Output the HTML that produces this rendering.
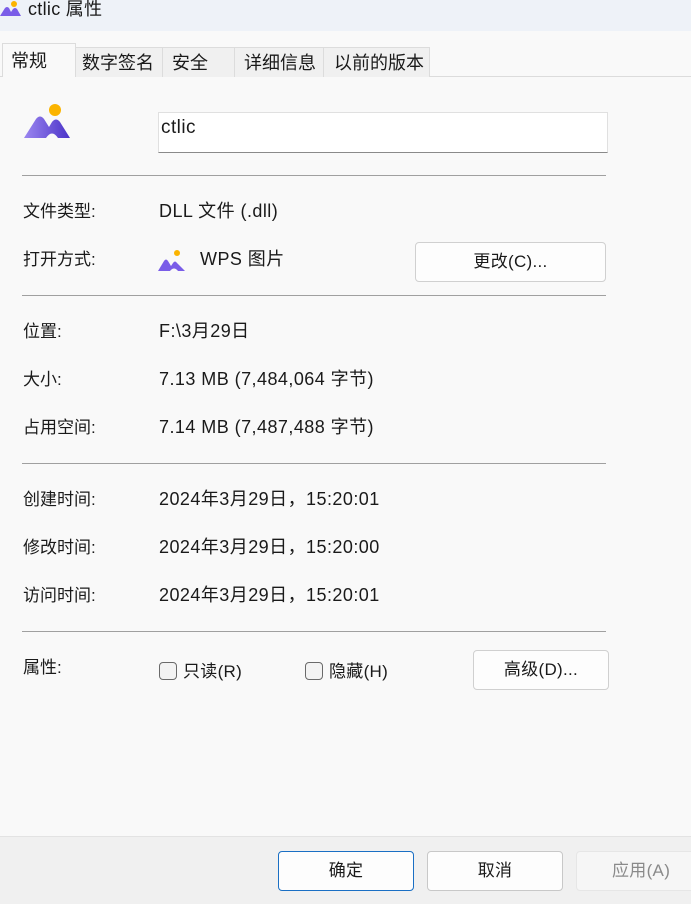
<!DOCTYPE html>
<html><head><meta charset="utf-8"><style>
body{margin:0;width:691px;height:903px;background:#f9f9f9;font-family:"Liberation Sans","Noto Sans CJK SC",sans-serif;font-size:17px;color:#1a1a1a;position:relative;overflow:hidden}
.a{position:absolute;white-space:nowrap;line-height:24px}
.v{font-size:18px;letter-spacing:0.45px}
.hr{position:absolute;left:22px;width:584px;height:1px;background:#a0a0a0}
.btn{position:absolute;background:#fdfdfd;border:1px solid #d0d0d0;border-radius:4px;text-align:center;box-sizing:border-box;font-size:17px;letter-spacing:0.3px}
.tab{position:absolute;top:47px;height:30px;background:#f0f0f0;border:1px solid #dcdcdc;border-bottom:none;box-sizing:border-box;line-height:30px;font-size:18px}
.cb{position:absolute;width:18px;height:18px;border:1px solid #6a6a6a;border-radius:4px;background:#f3f3f3;box-sizing:border-box}
</style></head><body>
<div style="position:absolute;left:0;top:0;width:691px;height:31px;background:#eef2f8"></div>
<svg style="position:absolute;left:0;top:0" width="22" height="20" viewBox="0 0 22 20"><circle cx="14" cy="4" r="3" fill="#fbb400"/><path d="M0 16 L5 8 Q7 6 9 8 L11 12 L13 9 Q15 7 17 9 L21 16 Z" fill="#7a5de8"/></svg>
<div class="a" style="left:28px;top:-3px;font-size:18px;letter-spacing:0.3px">ctlic 属性</div>
<div style="position:absolute;left:0;top:76px;width:691px;height:1px;background:#dcdcdc"></div>
<div class="tab" style="left:2px;top:43px;width:74px;height:34px;background:#f9f9f9;padding-left:8px;line-height:34px">常规</div>
<div class="tab" style="left:75px;width:88px;padding-left:6px">数字签名</div>
<div class="tab" style="left:162px;width:73px;padding-left:9px">安全</div>
<div class="tab" style="left:234px;width:90px;padding-left:9px">详细信息</div>
<div class="tab" style="left:323px;width:107px;padding-left:10px">以前的版本</div>
<svg style="position:absolute;left:22px;top:102px" width="50" height="38" viewBox="22 102 50 38"><circle cx="55" cy="110" r="6" fill="#fbb400"/><defs><linearGradient id="g" x1="0" x2="1"><stop offset="0" stop-color="#9b86f0"/><stop offset="1" stop-color="#4b34c8"/></linearGradient></defs><path d="M24 138 L36 119 Q40 114 44 119 L49 127 L52 122 Q56 117 60 122 L70 138 L58 138 Q52 129 46 138 Z" fill="url(#g)"/></svg>
<div style="position:absolute;left:158px;top:112px;width:450px;height:41px;background:#fff;border:1px solid #e0e0e0;border-bottom:1px solid #8a8a8a;box-sizing:border-box"></div>
<div class="a v" style="left:161px;top:116px;font-size:19px">ctlic</div>
<div class="hr" style="top:175px"></div>
<div class="a" style="left:23px;top:200px">文件类型:</div>
<div class="a v" style="left:159px;top:199px">DLL 文件 (.dll)</div>
<div class="a" style="left:23px;top:248px">打开方式:</div>
<svg style="position:absolute;left:158px;top:249px" width="30" height="24" viewBox="0 0 30 24"><circle cx="19" cy="4" r="3" fill="#fbb400"/><path d="M0 22 L6 12 Q8 9 10 12 L13 17 L15 14 Q17 11 19 14 L27 22 L20 22 Q16 17 12 22 Z" fill="#7a5de8"/></svg>
<div class="a v" style="left:200px;top:247px">WPS 图片</div>
<div class="btn" style="left:415px;top:242px;width:191px;height:40px;line-height:38px">更改(C)...</div>
<div class="hr" style="top:295px"></div>
<div class="a" style="left:23px;top:320px">位置:</div>
<div class="a v" style="left:159px;top:319px">F:\3月29日</div>
<div class="a" style="left:23px;top:368px">大小:</div>
<div class="a v" style="left:159px;top:367px">7.13 MB (7,484,064 字节)</div>
<div class="a" style="left:23px;top:416px">占用空间:</div>
<div class="a v" style="left:159px;top:415px">7.14 MB (7,487,488 字节)</div>
<div class="hr" style="top:463px"></div>
<div class="a" style="left:23px;top:488px">创建时间:</div>
<div class="a v" style="left:159px;top:487px">2024年3月29日，15:20:01</div>
<div class="a" style="left:23px;top:536px">修改时间:</div>
<div class="a v" style="left:159px;top:535px">2024年3月29日，15:20:00</div>
<div class="a" style="left:23px;top:584px">访问时间:</div>
<div class="a v" style="left:159px;top:583px">2024年3月29日，15:20:01</div>
<div class="hr" style="top:631px"></div>
<div class="a" style="left:23px;top:656px">属性:</div>
<div class="cb" style="left:159px;top:662px"></div>
<div class="a" style="left:183px;top:660px;letter-spacing:0.3px">只读(R)</div>
<div class="cb" style="left:305px;top:662px"></div>
<div class="a" style="left:329px;top:660px;letter-spacing:0.3px">隐藏(H)</div>
<div class="btn" style="left:473px;top:650px;width:136px;height:40px;line-height:38px">高级(D)...</div>
<div style="position:absolute;left:0;top:836px;width:691px;height:67px;background:#f0f0f0;border-top:1px solid #e3e3e3"></div>
<div class="btn" style="left:278px;top:851px;width:136px;height:40px;line-height:38px;border-color:#1a6fc4">确定</div>
<div class="btn" style="left:427px;top:851px;width:136px;height:40px;line-height:38px;border-color:#c8c8c8">取消</div>
<div class="btn" style="left:576px;top:851px;width:130px;height:40px;line-height:38px;background:#f6f6f6;border-color:#e6e6e6;color:#8a8a8a;text-align:left;padding-left:35px">应用(A)</div>
</body></html>
